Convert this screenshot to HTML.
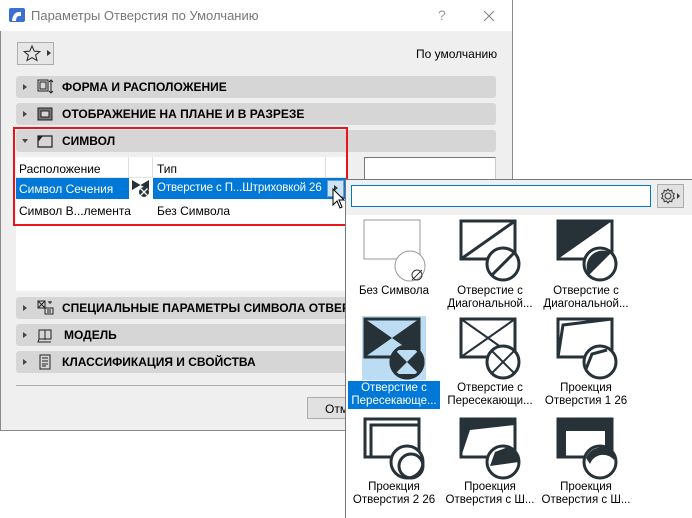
<!DOCTYPE html>
<html><head><meta charset="utf-8"><style>
*{box-sizing:border-box;margin:0;padding:0}
body{width:692px;height:518px;overflow:hidden;background:#fff;font-family:"Liberation Sans","DejaVu Sans",sans-serif;font-size:12px;color:#000;position:relative}
.abs{position:absolute}
#dlg{left:0;top:0;width:513px;height:431px;background:#efefef;border:1px solid #8a8a8a;border-top:none}
#title{left:0;top:0;width:512px;height:31px;background:#fff}
.bar{position:absolute;left:16px;width:480px;height:22px;background:#d6d6d6;border-radius:3px;font-weight:bold;font-size:12px;line-height:22px}
.bar .tri{position:absolute;left:7px;top:8px;width:0;height:0;border-left:4px solid #444;border-top:3.5px solid transparent;border-bottom:3.5px solid transparent}
.bar .lbl{position:absolute;left:46px}
.bar svg{position:absolute;left:20px;top:3px}
.cap{position:absolute;text-align:center;font-size:11.5px;line-height:13px;width:100px}
</style></head><body>
<div id="dlg" class="abs"></div>
<div id="title" class="abs">
 <svg class="abs" style="left:9px;top:8px" width="16" height="14" viewBox="0 0 16 14"><rect x="0" y="0" width="16" height="14" rx="2" fill="#3b6fd1"/><path d="M3 13 Q4 3 12 4 L12 8 Q7 7 7 13Z" fill="#fff"/></svg>
 <div class="abs" style="left:31px;top:8px;font-size:13px;color:#777">Параметры Отверстия по Умолчанию</div>
 <div class="abs" style="left:438px;top:7px;font-size:14px;color:#999">?</div>
 <svg class="abs" style="left:483px;top:10px" width="12" height="12"><path d="M1 1L11 11M11 1L1 11" stroke="#888" stroke-width="1.2"/></svg>
</div>
<div class="abs" style="left:17px;top:42px;width:37px;height:23px;border:1px solid #adadad;background:#e6e6e6"></div>
<svg class="abs" style="left:22px;top:44px" width="20" height="18" viewBox="0 0 20 18"><path d="M10 2L12.3 7.2 17.8 7.6 13.6 11.1 15 16.5 10 13.6 5 16.5 6.4 11.1 2.2 7.6 7.7 7.2Z" fill="none" stroke="#333" stroke-width="1.1"/></svg>
<div class="abs" style="left:47px;top:50px;border-left:4px solid #333;border-top:3.5px solid transparent;border-bottom:3.5px solid transparent"></div>
<div class="abs" style="left:416px;top:47px;font-size:12px">По умолчанию</div>

<div class="bar" style="top:76px"><div class="tri"></div><svg width="18" height="16"><rect x="2" y="1" width="10" height="11" fill="none" stroke="#222"/><rect x="4" y="3" width="6" height="7" fill="none" stroke="#222"/><path d="M15 1v13M13 3l2-2 2 2M13 12l2 2 2-2" stroke="#222" fill="none"/></svg><span class="lbl">ФОРМА И РАСПОЛОЖЕНИЕ</span></div>
<div class="bar" style="top:103px"><div class="tri"></div><svg width="18" height="16"><rect x="2" y="2" width="14" height="12" fill="#777" stroke="#222"/><rect x="5" y="5" width="8" height="6" fill="#d6d6d6" stroke="#222"/></svg><span class="lbl">ОТОБРАЖЕНИЕ НА ПЛАНЕ И В РАЗРЕЗЕ</span></div>
<div class="bar" style="top:130px"><div class="abs" style="left:6px;top:9px;border-top:4px solid #444;border-left:3.5px solid transparent;border-right:3.5px solid transparent"></div><svg width="18" height="16"><path d="M2 14V3H16V14Z M2 8 L6 3" fill="none" stroke="#222" stroke-width="1.2"/><path d="M2 3h5L2 9Z" fill="#222"/></svg><span class="lbl">СИМВОЛ</span></div>

<div class="abs" style="left:16px;top:157px;width:330px;height:134px;background:#fff"></div>
<div class="abs" style="left:16px;top:157px;width:330px;height:21px;border-bottom:1px solid #e4e4e4"></div>
<div class="abs" style="left:128px;top:157px;width:1px;height:21px;background:#ddd"></div>
<div class="abs" style="left:152px;top:157px;width:1px;height:21px;background:#ddd"></div>
<div class="abs" style="left:325px;top:157px;width:1px;height:21px;background:#ddd"></div>
<div class="abs" style="left:19px;top:162px">Расположение</div>
<div class="abs" style="left:157px;top:162px">Тип</div>
<div class="abs" style="left:16px;top:178px;width:330px;height:21px;background:#0078d7"></div>
<div class="abs" style="left:129px;top:178px;width:24px;height:21px;background:#fff"></div>
<svg class="abs" style="left:131px;top:179px" width="20" height="19" viewBox="0 0 20 19"><path d="M1 1H18V11H1Z" fill="#fff"/><path d="M1 1L9.5 6 1 11Z M18 1L9.5 6 18 11Z" fill="#263238"/><circle cx="13" cy="13" r="5" fill="#263238"/><path d="M9.5 9.5L16.5 16.5M16.5 9.5L9.5 16.5" stroke="#fff" stroke-width="1.3"/></svg>
<div class="abs" style="left:19px;top:182px;color:#fff">Символ Сечения</div>
<div class="abs" style="left:157px;top:182px;color:#fff;font-size:11.5px;letter-spacing:-0.1px">Отверстие с П...Штриховкой 26</div>
<div class="abs" style="left:327px;top:180px;width:17px;height:17px;background:#cde3f7;border:1px solid #6a9fd0"></div>
<div class="abs" style="left:334px;top:185px;border-left:4px solid #333;border-top:3.5px solid transparent;border-bottom:3.5px solid transparent"></div>
<svg class="abs" style="left:332px;top:188px" width="14" height="22"><path d="M1 1V17L5 13 8 20 10 19 7 12 12 12Z" fill="#fff" stroke="#000"/></svg>
<div class="abs" style="left:19px;top:204px">Символ В...лемента</div>
<div class="abs" style="left:157px;top:204px">Без Символа</div>
<div class="abs" style="left:13px;top:127px;width:335px;height:99px;border:2px solid #e8151b"></div>
<div class="abs" style="left:364px;top:157px;width:132px;height:30px;background:#fff;border:1px solid #777;border-right-color:#ccc"></div>

<div class="bar" style="top:297px;width:496px"><div class="tri"></div><svg width="18" height="16"><rect x="2" y="1" width="7" height="7" fill="none" stroke="#222"/><path d="M2 1l7 7M9 1L2 8" stroke="#222"/><rect x="9" y="8" width="8" height="6" fill="none" stroke="#222"/><path d="M11 10h4M11 12h4M12 2h4M14 1v3" stroke="#222"/></svg><span class="lbl">СПЕЦИАЛЬНЫЕ ПАРАМЕТРЫ СИМВОЛА ОТВЕРСТИЯ</span></div>
<div class="bar" style="top:324px"><div class="tri"></div><svg width="18" height="16"><path d="M3 3h12v9H3z M9 3v10 M3 12l-1 3h13" fill="none" stroke="#222"/></svg><span class="lbl" style="left:48px">МОДЕЛЬ</span></div>
<div class="bar" style="top:351px"><div class="tri"></div><svg width="18" height="16"><rect x="4" y="1" width="10" height="14" fill="none" stroke="#222"/><path d="M6 4h6M6 7h6M6 10h6M6 12h4" stroke="#222"/></svg><span class="lbl">КЛАССИФИКАЦИЯ И СВОЙСТВА</span></div>
<div class="abs" style="left:16px;top:385px;width:330px;height:1px;background:#aaa"></div>
<div class="abs" style="left:307px;top:397px;width:40px;height:22px;border:1px solid #adadad;background:#e1e1e1;padding:4px 0 0 17px">Отм</div>

<!-- popup -->
<div class="abs" style="left:345px;top:179px;width:347px;height:339px;background:#fff;border:1px solid #777;border-right:none;border-bottom:none"></div>
<div class="abs" style="left:346px;top:180px;width:346px;height:35px;background:#f0f0f0"></div>
<div class="abs" style="left:351px;top:185px;width:300px;height:22px;background:#fff;border:1px solid #0078d7"></div>
<div class="abs" style="left:657px;top:184px;width:27px;height:24px;border:1px solid #adadad;background:#e1e1e1"></div>
<svg class="abs" style="left:660px;top:187px" width="22" height="18" viewBox="0 0 22 18"><circle cx="8" cy="9" r="3" fill="none" stroke="#333"/><path d="M8 2l1.5 2 2.3-.7.3 2.4 2.2 1-1.2 2.3 1.2 2.3-2.2 1-.3 2.4-2.3-.7L8 16l-1.5-2-2.3.7-.3-2.4-2.2-1L2.9 9 1.7 6.7l2.2-1 .3-2.4 2.3.7Z" fill="none" stroke="#333"/><path d="M17 6l3 3-3 3Z" fill="#333"/></svg>

<!-- row1 -->
<svg class="abs" style="left:362px;top:218px" width="64" height="64" viewBox="0 0 64 64"><rect x="2" y="2" width="56" height="39" fill="none" stroke="#999"/><circle cx="48" cy="48" r="15" fill="#fff" stroke="#999"/><circle cx="55" cy="57" r="5" fill="none" stroke="#333"/><path d="M50 62l10-10" stroke="#333"/></svg>
<svg class="abs" style="left:458px;top:218px" width="64" height="64" viewBox="0 0 64 64"><rect x="3" y="3" width="54" height="38" fill="none" stroke="#263238" stroke-width="3"/><path d="M3 41L57 3" stroke="#263238" stroke-width="3"/><circle cx="45" cy="46" r="16" fill="#fff" stroke="#263238" stroke-width="3"/><path d="M34 57L56 35" stroke="#263238" stroke-width="3"/></svg>
<svg class="abs" style="left:555px;top:218px" width="64" height="64" viewBox="0 0 64 64"><path d="M3 3H57L3 41Z" fill="#263238"/><rect x="3" y="3" width="54" height="38" fill="none" stroke="#263238" stroke-width="3"/><circle cx="45" cy="46" r="16" fill="#fff" stroke="#263238" stroke-width="3"/><path d="M34 57A16 16 0 0 1 56 35Z" fill="#263238"/></svg>
<div class="cap" style="left:344px;top:285px">Без Символа</div>
<div class="cap" style="left:440px;top:285px">Отверстие с<br>Диагональной...</div>
<div class="cap" style="left:536px;top:285px">Отверстие с<br>Диагональной...</div>

<!-- row2 -->
<div class="abs" style="left:362px;top:316px;width:64px;height:64px;background:#bcdcf4"></div>
<svg class="abs" style="left:362px;top:316px" width="64" height="64" viewBox="0 0 64 64"><path d="M3 3L30 22 3 41Z M57 3L30 22 57 41Z" fill="#263238"/><rect x="3" y="3" width="54" height="38" fill="none" stroke="#263238" stroke-width="3"/><circle cx="45" cy="46" r="16" fill="#263238" stroke="#263238" stroke-width="3"/><path d="M33 34L45 46 57 34Z M33 58L45 46 57 58Z" fill="#bcdcf4"/><circle cx="45" cy="46" r="16" fill="none" stroke="#263238" stroke-width="3"/></svg>
<svg class="abs" style="left:458px;top:316px" width="64" height="64" viewBox="0 0 64 64"><rect x="3" y="3" width="54" height="38" fill="none" stroke="#263238" stroke-width="3"/><path d="M3 3L57 41M57 3L3 41" stroke="#263238" stroke-width="2"/><circle cx="45" cy="46" r="16" fill="#fff" stroke="#263238" stroke-width="3"/><path d="M34 35L56 57M56 35L34 57" stroke="#263238" stroke-width="2"/></svg>
<svg class="abs" style="left:555px;top:316px" width="64" height="64" viewBox="0 0 64 64"><rect x="3" y="3" width="54" height="38" fill="none" stroke="#263238" stroke-width="3"/><path d="M3 41L8 9 57 3" fill="none" stroke="#263238" stroke-width="3"/><circle cx="45" cy="46" r="16" fill="#fff" stroke="#263238" stroke-width="3"/><path d="M31 53L37 38 52 34" fill="none" stroke="#263238" stroke-width="3"/></svg>
<div class="abs" style="left:348px;top:381px;width:92px;height:28px;background:#0078d7"></div>
<div class="cap" style="left:344px;top:382px;color:#fff">Отверстие с<br>Пересекающе...</div>
<div class="cap" style="left:440px;top:382px">Отверстие с<br>Пересекающи...</div>
<div class="cap" style="left:536px;top:382px">Проекция<br>Отверстия 1 26</div>

<!-- row3 -->
<svg class="abs" style="left:362px;top:416px" width="64" height="64" viewBox="0 0 64 64"><rect x="3" y="3" width="54" height="38" fill="none" stroke="#263238" stroke-width="3"/><path d="M9 41V9H57" fill="none" stroke="#263238" stroke-width="3"/><circle cx="45" cy="46" r="16" fill="#fff" stroke="#263238" stroke-width="3"/><circle cx="49" cy="50" r="12" fill="none" stroke="#263238" stroke-width="3"/></svg>
<svg class="abs" style="left:458px;top:416px" width="64" height="64" viewBox="0 0 64 64"><path d="M3 3H57V9L12 14 3 41Z" fill="#263238"/><rect x="3" y="3" width="54" height="38" fill="none" stroke="#263238" stroke-width="3"/><circle cx="45" cy="46" r="16" fill="#fff" stroke="#263238" stroke-width="3"/><path d="M32 50L37 36 50 31 A16 16 0 0 1 61 46Z" fill="#263238"/></svg>
<svg class="abs" style="left:555px;top:416px" width="64" height="64" viewBox="0 0 64 64"><path d="M3 3H57V41H50V15H11V41H3Z" fill="#263238"/><rect x="3" y="3" width="54" height="38" fill="none" stroke="#263238" stroke-width="3"/><circle cx="45" cy="46" r="16" fill="#fff" stroke="#263238" stroke-width="3"/><path d="M31 42 A16 16 0 0 1 59 38 L59 44 A14 14 0 0 0 35 48Z" fill="#263238"/></svg>
<div class="cap" style="left:344px;top:481px">Проекция<br>Отверстия 2 26</div>
<div class="cap" style="left:440px;top:481px">Проекция<br>Отверстия с Ш...</div>
<div class="cap" style="left:536px;top:481px">Проекция<br>Отверстия с Ш...</div>
</body></html>
